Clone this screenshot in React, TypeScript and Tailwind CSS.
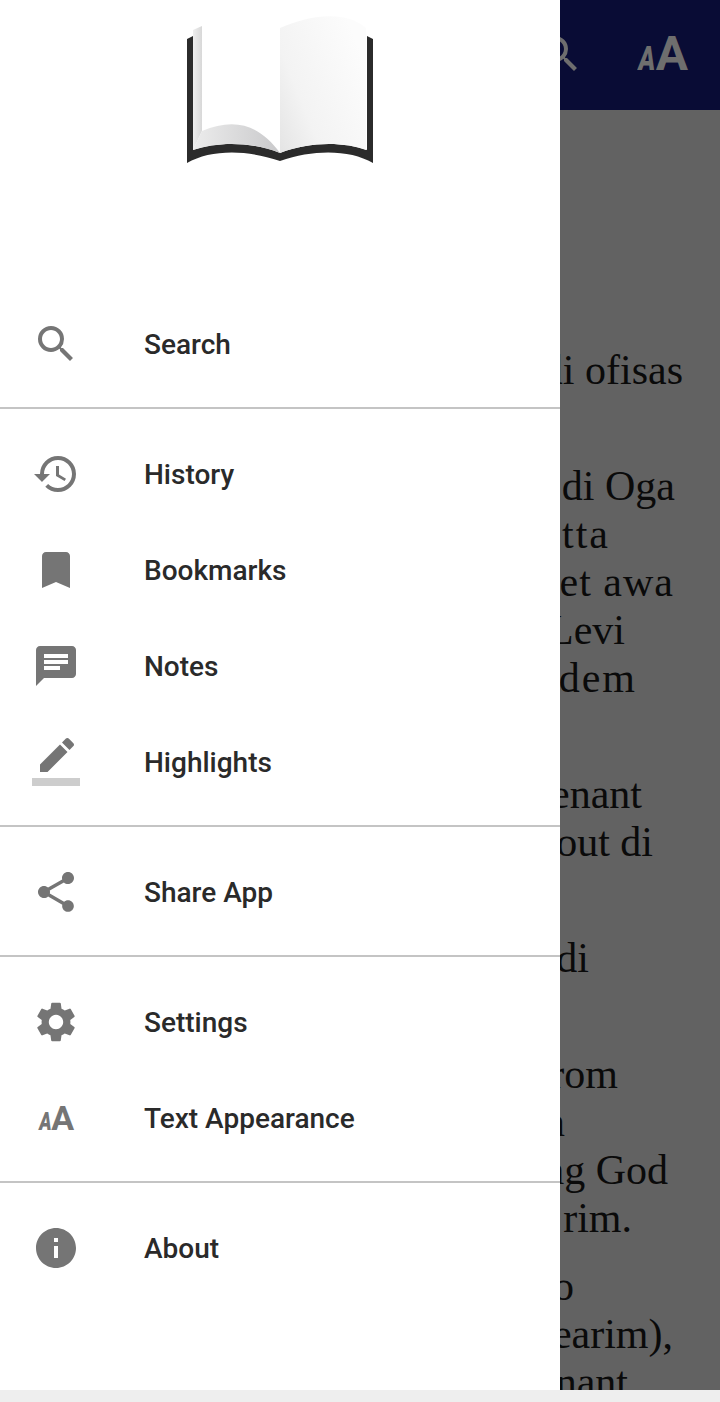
import type { ReactNode } from "react";
import {
  MdChat,
  MdBookmark,
  MdHistory,
  MdInfo,
  MdSearch,
  MdSettings,
  MdShare,
} from "react-icons/md";

const ROBOTO = "font-['Roboto',sans-serif]";

function BookLogo() {
  return (
    <svg width="200" height="160" viewBox="180 10 200 160">
      <defs>
        <linearGradient id="rightPage" x1="0" y1="1" x2="1" y2="0.35">
          <stop offset="0" stopColor="#e4e4e4" />
          <stop offset="0.35" stopColor="#f3f3f3" />
          <stop offset="1" stopColor="#fcfcfc" />
        </linearGradient>
        <linearGradient id="leftEdge" x1="0" y1="0" x2="1" y2="0">
          <stop offset="0" stopColor="#eeeeee" />
          <stop offset="1" stopColor="#d8d8d8" />
        </linearGradient>
        <linearGradient id="curl" x1="0" y1="0" x2="1" y2="0">
          <stop offset="0" stopColor="#ececec" />
          <stop offset="1" stopColor="#c9c9cb" />
        </linearGradient>
      </defs>
      <path
        d="M187 39 L193 36 L193 150 C215 142 250 141 280 153 C310 141 345 142 367 150 L367 36 L373 39 L373 163 C350 150 315 149 280 161 C245 149 210 150 187 163 Z"
        fill="#2b2b2b"
      />
      <path d="M193 30 L202 26 L202 131 L193 150 Z" fill="url(#leftEdge)" />
      <path d="M193 150 L202 131 C235 117 260 125 280 153 C250 141 218 142 193 150 Z" fill="url(#curl)" />
      <path
        d="M280 28 C310 15 345 10 366 28 L366 150 C345 142 310 141 280 153 Z"
        fill="url(#rightPage)"
      />
    </svg>
  );
}

function HighlightIcon() {
  return (
    <svg width="48" height="48" viewBox="0 0 24 24" fill="#757575">
      <path d="M17.75 7L14 3.25l-10 10V17h3.75l10-10zm2.96-2.96c.39-.39.39-1.02 0-1.41L18.37.29c-.39-.39-1.02-.39-1.41 0L15 2.25 18.75 6l1.96-1.96z" />
      <path d="M0 20h24v4H0z" fillOpacity=".36" />
    </svg>
  );
}

function TextSizeIcon({ large, small, box }: { large: string; small: string; box: string }) {
  return (
    <span className={`flex w-12 items-baseline justify-end font-bold leading-none ${ROBOTO} ${box}`}>
      <span className={`origin-right scale-x-75 font-black italic ${small}`}>A</span>
      <span className={large}>A</span>
    </span>
  );
}

function Row({ icon, label }: { icon: ReactNode; label: string }) {
  return (
    <div className="flex h-24 items-center gap-16 pl-8">
      <div className="flex w-12 items-center justify-center text-[#757575]">{icon}</div>
      <span className={`pt-[2px] text-[28px] font-medium text-[#2a2a2a] ${ROBOTO}`}>{label}</span>
    </div>
  );
}

function Section({ children, last }: { children: ReactNode; last?: boolean }) {
  return (
    <div className={`pt-[17px] pb-[15px] ${last ? "" : "border-b-2 border-[#c4c4c4]"}`}>{children}</div>
  );
}

const verses = [
  { gap: "mt-0", lines: [{ text: "di ofisas", pad: "pr-[37px]" }] },
  {
    gap: "mt-[68px]",
    lines: [
      { text: "and di Oga", pad: "pr-[45px]" },
      { text: "tta", pad: "pr-[110px] tracking-[2px]" },
      { text: "et awa", pad: "pr-[46px] tracking-[1px]" },
      { text: "Levi", pad: "pr-[95px]" },
      { text: "dem", pad: "pr-[83px] tracking-[2px]" },
    ],
  },
  {
    gap: "mt-[68px]",
    lines: [
      { text: "covenant", pad: "pr-[78px]" },
      { text: "about di", pad: "pr-[67px]" },
    ],
  },
  { gap: "mt-[68px]", lines: [{ text: "odi", pad: "pr-[131px]" }] },
  {
    gap: "mt-[68px]",
    lines: [
      { text: "from", pad: "pr-[102px]" },
      { text: "han", pad: "pr-[155px]" },
      { text: "bring God", pad: "pr-[52px]" },
      { text: "rim.", pad: "pr-[88px]" },
    ],
  },
  {
    gap: "mt-[20px]",
    lines: [
      { text: "go", pad: "pr-[146px]" },
      { text: "Jearim),", pad: "pr-[47px]" },
      { text: "covenant ", pad: "pr-[92px]" },
    ],
  },
];

export default function App() {
  return (
    <div className="flex h-[1402px] w-[720px] flex-col overflow-hidden bg-[#eeeeee]">
      <div className="flex h-[1390px]">
        <aside className="flex w-[560px] shrink-0 flex-col bg-white">
          <div className="flex h-[296px] justify-center pt-[10px]">
            <div>
              <BookLogo />
            </div>
          </div>
          <div className="-mt-[17px]">
            <Section>
              <Row icon={<MdSearch size={48} />} label="Search" />
            </Section>
            <Section>
              <Row icon={<MdHistory size={48} />} label="History" />
              <Row icon={<MdBookmark size={48} />} label="Bookmarks" />
              <Row icon={<MdChat size={48} />} label="Notes" />
              <Row icon={<HighlightIcon />} label="Highlights" />
            </Section>
            <Section>
              <Row icon={<MdShare size={48} />} label="Share App" />
            </Section>
            <Section>
              <Row icon={<MdSettings size={48} />} label="Settings" />
              <Row
                icon={<TextSizeIcon large="text-[34px]" small="text-[25px]" box="pr-1.5 text-[#757575]" />}
                label="Text Appearance"
              />
            </Section>
            <Section last>
              <Row icon={<MdInfo size={48} />} label="About" />
            </Section>
          </div>
        </aside>
        <main className="flex w-40 flex-col overflow-hidden bg-[#626262]">
          <header className="flex h-[110px] shrink-0 items-center justify-end gap-14 bg-[#090c35] pr-8 pb-0.5 text-[#6e6e6e]">
            <MdSearch size={48} className="shrink-0" />
            <TextSizeIcon large="text-[48px]" small="text-[34px]" box="text-[#6e6e6e]" />
          </header>
          <div className="pt-[236px] font-['Liberation_Serif',serif] text-[42px] leading-[48px] text-[#0a0a0a]">
            {verses.map((verse, i) => (
              <div key={i} className={verse.gap}>
                {verse.lines.map((line) => (
                  <div key={line.text} className={`flex justify-end whitespace-nowrap ${line.pad}`}>
                    {line.text}
                  </div>
                ))}
              </div>
            ))}
          </div>
        </main>
      </div>
    </div>
  );
}
